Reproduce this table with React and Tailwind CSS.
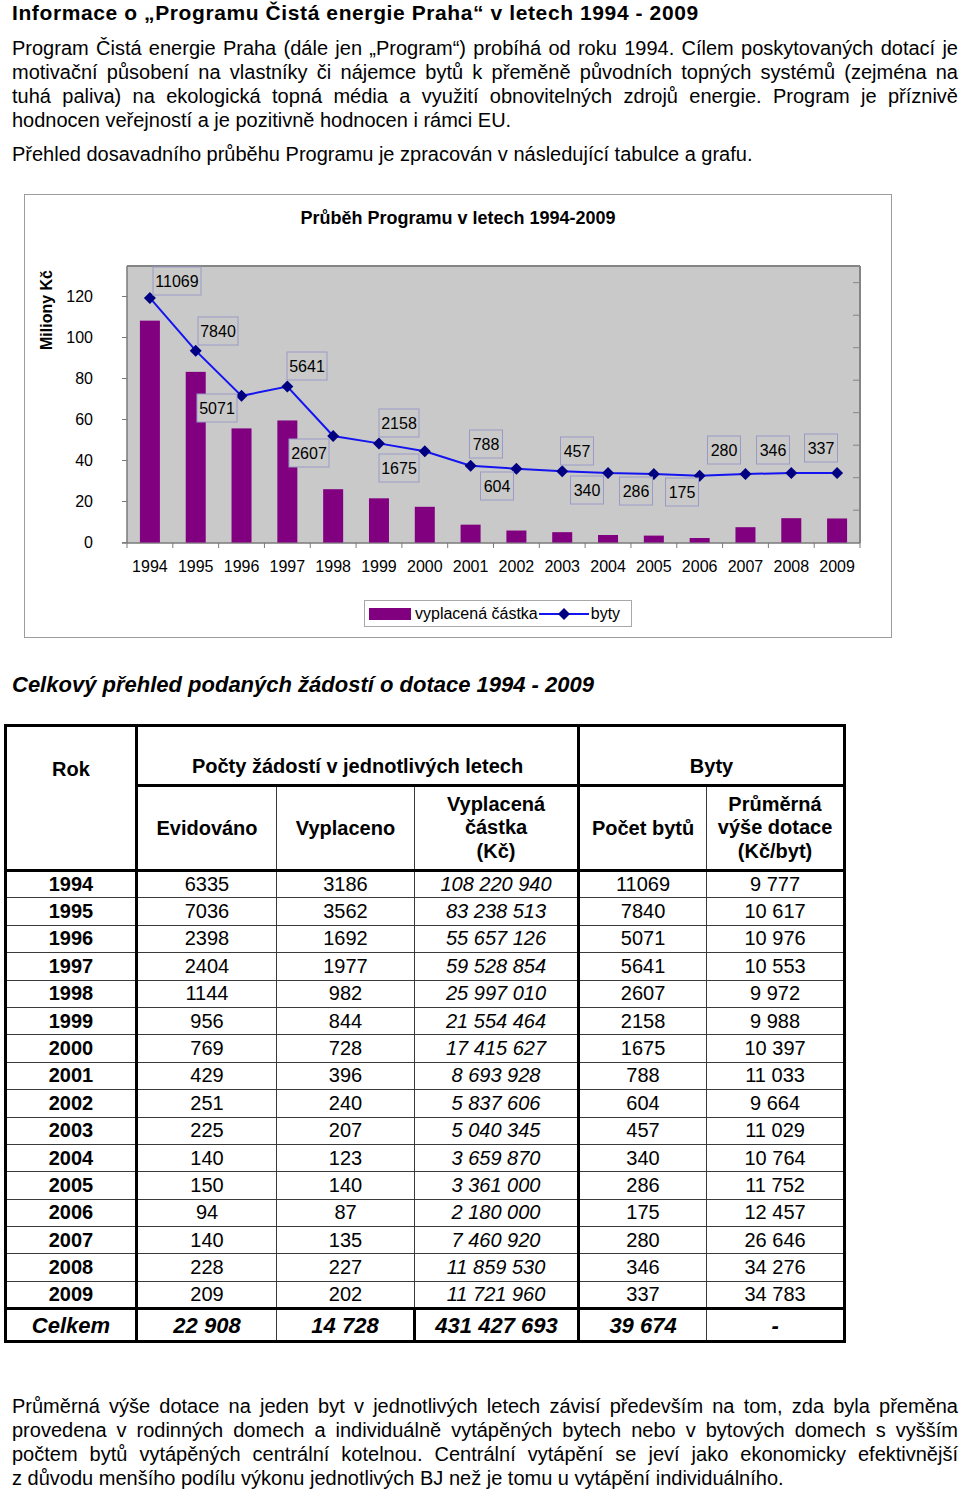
import React from "react";

const para1 = [
  "Program Čistá energie Praha (dále jen „Program“) probíhá od roku 1994. Cílem poskytovaných dotací je",
  "motivační působení na vlastníky či nájemce bytů k přeměně původních topných systémů (zejména na",
  "tuhá paliva) na ekologická topná média a využití obnovitelných zdrojů energie. Program je příznivě",
  "hodnocen veřejností a je pozitivně hodnocen i rámci EU.",
];

const para3 = [
  "Průměrná výše dotace na jeden byt v jednotlivých letech závisí především na tom, zda byla přeměna",
  "provedena v rodinných domech a individuálně vytápěných bytech nebo v bytových domech s vyšším",
  "počtem bytů vytápěných centrální kotelnou. Centrální vytápění se jeví jako ekonomicky efektivnější",
  "z důvodu menšího podílu výkonu jednotlivých BJ než je tomu u vytápění individuálního.",
];

const rows = [
  ["1994", "6335", "3186", "108 220 940", "11069", "9 777"],
  ["1995", "7036", "3562", "83 238 513", "7840", "10 617"],
  ["1996", "2398", "1692", "55 657 126", "5071", "10 976"],
  ["1997", "2404", "1977", "59 528 854", "5641", "10 553"],
  ["1998", "1144", "982", "25 997 010", "2607", "9 972"],
  ["1999", "956", "844", "21 554 464", "2158", "9 988"],
  ["2000", "769", "728", "17 415 627", "1675", "10 397"],
  ["2001", "429", "396", "8 693 928", "788", "11 033"],
  ["2002", "251", "240", "5 837 606", "604", "9 664"],
  ["2003", "225", "207", "5 040 345", "457", "11 029"],
  ["2004", "140", "123", "3 659 870", "340", "10 764"],
  ["2005", "150", "140", "3 361 000", "286", "11 752"],
  ["2006", "94", "87", "2 180 000", "175", "12 457"],
  ["2007", "140", "135", "7 460 920", "280", "26 646"],
  ["2008", "228", "227", "11 859 530", "346", "34 276"],
  ["2009", "209", "202", "11 721 960", "337", "34 783"],
];

// millions paid out per year, flats per year
const paid = [108.22094, 83.238513, 55.657126, 59.528854, 25.99701, 21.554464, 17.415627, 8.693928, 5.837606, 5.040345, 3.65987, 3.361, 2.18, 7.46092, 11.85953, 11.72196];
const flats = [11069, 7840, 5071, 5641, 2607, 2158, 1675, 788, 604, 457, 340, 286, 175, 280, 346, 337];

// data label boxes: [centerX, top]
const labelPos = [
  [177, 267], [218, 317], [217, 394], [307, 352], [309, 439], [399, 409], [399, 454], [486, 430],
  [497, 472], [577, 437], [587, 476], [636, 477], [682, 478], [724, 436], [773, 436], [821, 434],
];

const X0 = 127;
const STEP = 733 / 16;
const cx = (i) => X0 + STEP * (i + 0.5);
const barY = (v) => 542.5 - v * 2.05;
const lineY = (b) => 478.6 - b * 0.01632;

function Chart() {
  const pts = flats.map((b, i) => `${cx(i)},${lineY(b)}`).join(" ");
  return (
    <svg width="866" height="340" viewBox="25 250 866 340">
      <text x="46" y="310" transform="rotate(-90 46 310)" textAnchor="middle" dy="0.35em" fontSize="16" fontWeight="bold">
        Miliony Kč
      </text>
      <rect x="127" y="266" width="733" height="277" fill="#c9c9c9" />
      <line x1="127" y1="266" x2="860" y2="266" stroke="#858585" strokeWidth="2" />
      <line x1="860" y1="266" x2="860" y2="543" stroke="#858585" strokeWidth="2" />
      <line x1="127" y1="266" x2="127" y2="543" stroke="#7a7a7a" strokeWidth="1.5" />
      <line x1="122" y1="543" x2="860" y2="543" stroke="#7a7a7a" strokeWidth="1.5" />
      {[0, 20, 40, 60, 80, 100, 120].map((v, k) => {
        const y = 542.5 - k * 41;
        return (
          <g key={v}>
            <line x1="122" y1={y} x2="127" y2={y} stroke="#7a7a7a" strokeWidth="1" />
            <text x="93" y={y} dy="0.35em" textAnchor="end" fontSize="16">{v}</text>
          </g>
        );
      })}
      {[1, 2, 3, 4, 5, 6, 7, 8].map((k) => (
        <line key={k} x1="853" y1={542.7 - k * 32.5} x2="860" y2={542.7 - k * 32.5} stroke="#858585" strokeWidth="1" />
      ))}
      {Array.from({ length: 17 }).map((_, i) => (
        <line key={i} x1={X0 + STEP * i} y1="543" x2={X0 + STEP * i} y2="548" stroke="#7a7a7a" strokeWidth="1" />
      ))}
      {paid.map((v, i) => (
        <rect key={i} x={cx(i) - 10} y={barY(v)} width="20" height={542.5 - barY(v)} fill="#800080" />
      ))}
      <polyline points={pts} fill="none" stroke="#1414f0" strokeWidth="2" />
      {flats.map((b, i) => {
        const x = cx(i);
        const y = lineY(b);
        return <polygon key={i} points={`${x},${y - 6} ${x + 6},${y} ${x},${y + 6} ${x - 6},${y}`} fill="#000080" />;
      })}
      {flats.map((b, i) => {
        const [lx, ly] = labelPos[i];
        const w = b > 9999 ? 48 : b > 999 ? 40 : 33;
        return (
          <g key={i}>
            <rect x={lx - w / 2} y={ly} width={w} height="28" fill="#c9c9c9" stroke="#9a9ac8" strokeWidth="1" />
            <text x={lx} y={ly + 14} dy="0.35em" textAnchor="middle" fontSize="16">{b}</text>
          </g>
        );
      })}
      {paid.map((_, i) => (
        <text key={i} x={cx(i)} y="566" dy="0.35em" textAnchor="middle" fontSize="16">{1994 + i}</text>
      ))}
    </svg>
  );
}

function JustLines({ lines }) {
  return (
    <div className="text-[20px] leading-[24px]">
      {lines.map((l, i) => (
        <div key={i} className={i < lines.length - 1 ? "text-justify [text-align-last:justify]" : ""}>
          {l}
        </div>
      ))}
    </div>
  );
}

const thin = "border border-[#3a3a3a]";

export default function App() {
  return (
    <div className="w-[960px] min-h-[1492px] bg-white text-black font-['Liberation_Sans',Arial,sans-serif]">
      <div className="pl-[12px] pr-[2px]">
        <h1 className="text-[21px] font-bold leading-[26px] tracking-[0.6px]">
          Informace o „Programu Čistá energie Praha“ v letech 1994 - 2009
        </h1>
        <div className="mt-[10px]">
          <JustLines lines={para1} />
        </div>
        <p className="mt-[10px] text-[20px] leading-[24px]">
          Přehled dosavadního průběhu Programu je zpracován v následující tabulce a grafu.
        </p>
      </div>

      <div className="mt-[28px] ml-[24px] w-[868px] h-[444px] border border-[#9c9c9c] flex flex-col">
        <div className="h-[55px] pt-[12px] text-center text-[18px] leading-[22px] font-bold">
          Průběh Programu v letech 1994-2009
        </div>
        <Chart />
        <div className="mt-[10px] ml-[339px] w-[268px] h-[27px] border border-[#a8a8a8] flex items-center text-[16px]">
          <div className="ml-[4px] w-[42px] h-[12px] bg-[#800080]" />
          <span className="ml-[4px]">vyplacená částka</span>
          <svg width="50" height="14" className="ml-[1px]">
            <line x1="0" y1="7" x2="50" y2="7" stroke="#1414f0" strokeWidth="2" />
            <polygon points="25,1 31,7 25,13 19,7" fill="#000080" />
          </svg>
          <span className="ml-[2px]">byty</span>
        </div>
      </div>

      <h2 className="mt-[33px] pl-[12px] text-[22px] leading-[28px] font-bold italic">
        Celkový přehled podaných žádostí o dotace 1994 - 2009
      </h2>

      <table className="mt-[25px] ml-[4px] w-[841px] table-fixed border-collapse border-[3px] border-black text-[20px] leading-[23px] text-center">
        <colgroup>
          <col className="w-[131px]" />
          <col className="w-[140px]" />
          <col className="w-[138px]" />
          <col className="w-[164px]" />
          <col className="w-[128px]" />
          <col className="w-[138px]" />
        </colgroup>
        <thead>
          <tr className="h-[60px]">
            <th rowSpan={2} className="align-top pt-[31px] border-[3px] border-black font-bold">Rok</th>
            <th colSpan={3} className="align-bottom pb-[6px] border-[3px] border-black font-bold">
              Počty žádostí v jednotlivých letech
            </th>
            <th colSpan={2} className="align-bottom pb-[6px] border-[3px] border-black font-bold">Byty</th>
          </tr>
          <tr className="h-[85px]">
            <th className={`${thin} border-b-[3px] border-b-black font-bold`}>Evidováno</th>
            <th className={`${thin} border-b-[3px] border-b-black font-bold`}>Vyplaceno</th>
            <th className={`${thin} border-b-[3px] border-b-black border-r-[3px] border-r-black font-bold leading-[23.5px]`}>
              Vyplacená<br />částka<br />(Kč)
            </th>
            <th className={`${thin} border-b-[3px] border-b-black font-bold`}>Počet bytů</th>
            <th className={`${thin} border-b-[3px] border-b-black font-bold leading-[23.5px]`}>
              Průměrná<br />výše dotace<br />(Kč/byt)
            </th>
          </tr>
        </thead>
        <tbody>
          {rows.map((r) => (
            <tr key={r[0]} className="h-[27.4px]">
              <td className={`${thin} border-r-[3px] border-r-black font-bold p-0`}>{r[0]}</td>
              <td className={`${thin} p-0`}>{r[1]}</td>
              <td className={`${thin} p-0`}>{r[2]}</td>
              <td className={`${thin} border-r-[3px] border-r-black italic p-0`}>{r[3]}</td>
              <td className={`${thin} p-0`}>{r[4]}</td>
              <td className={`${thin} p-0`}>{r[5]}</td>
            </tr>
          ))}
          <tr className="h-[33px] font-bold italic text-[22px]">
            <td className="border-[3px] border-black p-0">Celkem</td>
            <td className="border-t-[3px] border-t-black border border-[#3a3a3a] p-0">22 908</td>
            <td className="border-t-[3px] border-t-black border border-[#3a3a3a] p-0">14 728</td>
            <td className="border-[3px] border-black p-0">431 427 693</td>
            <td className="border-t-[3px] border-t-black border border-[#3a3a3a] p-0">39 674</td>
            <td className="border-t-[3px] border-t-black border border-[#3a3a3a] p-0">-</td>
          </tr>
        </tbody>
      </table>

      <div className="mt-[51px] pl-[12px] pr-[2px]">
        <JustLines lines={para3} />
      </div>
    </div>
  );
}
